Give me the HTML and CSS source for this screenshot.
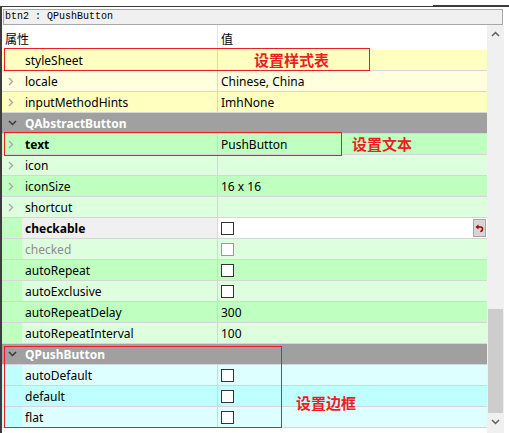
FILE: index.html
```html
<!DOCTYPE html>
<html>
<head>
<meta charset="utf-8">
<title>Property Editor</title>
<link rel="stylesheet" href="styles.css">
</head>
<body>
<div class="edge"><div class="edge-thin"></div><div class="edge-thick"></div></div>
<div class="window">
  <div class="objname">btn2 : QPushButton</div>
  <div class="view">
    <div class="tree">
      <div class="head"><div class="hname">属性</div><div class="hval">值</div></div>

      <div class="row yellow dark leaf"><div class="name"><span class="br"></span><span class="label">styleSheet</span></div><div class="val"></div></div>
      <div class="row yellow light"><div class="name"><span class="br"><svg class="chev" width="6" height="9" viewBox="0 0 6 9"><path d="M1 1 L4.5 4.5 L1 8"/></svg></span><span class="label">locale</span></div><div class="val"><span class="vtext">Chinese, China</span></div></div>
      <div class="row yellow dark"><div class="name"><span class="br"><svg class="chev" width="6" height="9" viewBox="0 0 6 9"><path d="M1 1 L4.5 4.5 L1 8"/></svg></span><span class="label">inputMethodHints</span></div><div class="val"><span class="vtext">ImhNone</span></div></div>

      <div class="row group"><div class="gname"><span class="br"><svg class="gchev" width="9" height="6" viewBox="0 0 9 6"><path d="M1 1 L4.5 4.5 L8 1"/></svg></span><span class="label">QAbstractButton</span></div></div>

      <div class="row green dark"><div class="name"><span class="br"><svg class="chev" width="6" height="9" viewBox="0 0 6 9"><path d="M1 1 L4.5 4.5 L1 8"/></svg></span><span class="label bold">text</span></div><div class="val"><span class="vtext">PushButton</span></div></div>
      <div class="row green light"><div class="name"><span class="br"><svg class="chev" width="6" height="9" viewBox="0 0 6 9"><path d="M1 1 L4.5 4.5 L1 8"/></svg></span><span class="label">icon</span></div><div class="val"></div></div>
      <div class="row green dark"><div class="name"><span class="br"><svg class="chev" width="6" height="9" viewBox="0 0 6 9"><path d="M1 1 L4.5 4.5 L1 8"/></svg></span><span class="label">iconSize</span></div><div class="val"><span class="vtext">16 x 16</span></div></div>
      <div class="row green light"><div class="name"><span class="br"><svg class="chev" width="6" height="9" viewBox="0 0 6 9"><path d="M1 1 L4.5 4.5 L1 8"/></svg></span><span class="label">shortcut</span></div><div class="val"></div></div>
      <div class="row green dark leaf editing"><div class="name"><span class="br"></span><span class="label bold">checkable</span></div><div class="val"><span class="cb"></span><span class="reset"><svg width="9" height="9" viewBox="0 0 9 9"><path class="rhead" d="M0.5 3 L3.5 0.5 L3.5 5.5 Z"/><path class="rtail" d="M3 3 H5.5 Q7.5 3 7.5 5 Q7.5 7.2 5.3 7.5"/></svg></span></div></div>
      <div class="row green light leaf disabled"><div class="name"><span class="br"></span><span class="label">checked</span></div><div class="val"><span class="cb"></span></div></div>
      <div class="row green dark leaf"><div class="name"><span class="br"></span><span class="label">autoRepeat</span></div><div class="val"><span class="cb"></span></div></div>
      <div class="row green light leaf"><div class="name"><span class="br"></span><span class="label">autoExclusive</span></div><div class="val"><span class="cb"></span></div></div>
      <div class="row green dark leaf"><div class="name"><span class="br"></span><span class="label">autoRepeatDelay</span></div><div class="val"><span class="vtext">300</span></div></div>
      <div class="row green light leaf"><div class="name"><span class="br"></span><span class="label">autoRepeatInterval</span></div><div class="val"><span class="vtext">100</span></div></div>

      <div class="row group"><div class="gname"><span class="br"><svg class="gchev" width="9" height="6" viewBox="0 0 9 6"><path d="M1 1 L4.5 4.5 L8 1"/></svg></span><span class="label">QPushButton</span></div></div>

      <div class="row cyan light leaf"><div class="name"><span class="br"></span><span class="label">autoDefault</span></div><div class="val"><span class="cb"></span></div></div>
      <div class="row cyan dark leaf"><div class="name"><span class="br"></span><span class="label">default</span></div><div class="val"><span class="cb"></span></div></div>
      <div class="row cyan light leaf"><div class="name"><span class="br"></span><span class="label">flat</span></div><div class="val"><span class="cb"></span></div></div>
    </div>
    <div class="scroll">
      <div class="sbtn"><svg class="schev" width="9" height="6" viewBox="0 0 9 6"><path d="M1 5 L4.5 1.5 L8 5"/></svg></div>
      <div class="track"><div class="thumb"></div></div>
      <div class="sbtn"><svg class="schev" width="9" height="6" viewBox="0 0 9 6"><path d="M1 1 L4.5 4.5 L8 1"/></svg></div>
    </div>
  </div>
</div>

<div class="mark mark-style"></div>
<div class="note note-style">设置样式表</div>
<div class="mark mark-text"></div>
<div class="note note-text">设置文本</div>
<div class="mark mark-push"></div>
<div class="note note-push">设置边框</div>
</body>
</html>
```
FILE: styles.css
```css
* { box-sizing: border-box; }
html, body { margin: 0; padding: 0; background: #fff; }
body {
  width: 509px;
  height: 433px;
  overflow: hidden;
  position: relative;
  font-family: "Noto Sans", "Noto Sans CJK SC", sans-serif;
  font-size: 12px;
  color: #000;
}

.edge { display: flex; height: 7px; align-items: flex-start; padding-top: 5px; }
.edge-thin { flex: 0 0 433px; height: 1px; margin-top: 1px; background: #3c3c3c; }
.edge-thick { flex: 1; height: 2px; background: #3c3c3c; }

.window {
  border-left: 2px solid #3c3c3c;
  height: 426px;
  padding-top: 2px;
}

.objname {
  margin-left: 1px;
  width: 500px;
  height: 16px;
  border: 1px solid #a8a8a8;
  background: #f0f0f0;
  font-family: "Liberation Mono", monospace;
  font-size: 10px;
  line-height: 14px;
  padding-left: 1px;
  color: #000;
}

.view { display: flex; height: 408px; }
.tree { width: 485px; overflow: hidden; }

.head {
  display: flex;
  height: 25px;
  background: #fff;
}
.hname { width: 216px; padding: 5px 0 0 3px; border-right: 1px solid #e3e3e3; }
.hval { flex: 1; padding: 5px 0 0 3px; }

.row {
  display: flex;
  height: 21px;
  border-bottom: 1px solid #d6d6d6;
  line-height: 20px;
}
.yellow { --c: #ffffbf; --l: #ffffdd; }
.green { --c: #bfffbf; --l: #ddffdd; }
.cyan { --c: #bfffff; --l: #ddffff; }
.dark { background: var(--c); }
.light { background: var(--l); }
.leaf .br { background: var(--c); }

.name { display: flex; width: 216px; border-right: 1px solid #d6d6d6; }
.br { flex: 0 0 20px; display: flex; align-items: center; justify-content: center; }
.label { padding: 2px 0 0 3px; line-height: 18px; white-space: nowrap; }
.bold { font-weight: bold; }
.val { flex: 1; padding-left: 3px; display: flex; align-items: center; white-space: nowrap; }
.vtext { padding-top: 2px; line-height: 18px; }

.chev { margin-left: -2px; }
.chev path { fill: none; stroke: #a8a8a8; stroke-width: 1.4; }

.group { background: #a0a0a0; }
.gname { display: flex; flex: 1; }
.group .label { color: #fff; font-weight: bold; }
.gchev path { fill: none; stroke: #3a3a3a; stroke-width: 1.5; }

.editing .name { background: #f0f0f0; }
.editing .name .br { background: var(--c); }
.editing .val { background: #fff; }

.cb {
  width: 13px;
  height: 13px;
  border: 1px solid #333;
  background: #fff;
  margin-top: 1px;
}
.disabled .label { color: #8c8c8c; }
.disabled .cb { border-color: #9a9a9a; }

.reset {
  margin-left: auto;
  margin-right: 1px;
  width: 13px;
  height: 18px;
  background: #d6d6d6;
  border: 1px solid #a6a6a6;
  display: flex;
  align-items: center;
  justify-content: center;
}
.rhead { fill: #a00000; }
.rtail { fill: none; stroke: #a00000; stroke-width: 1.6; }

.scroll {
  width: 17px;
  background: #f0f0f0;
  display: flex;
  flex-direction: column;
}
.sbtn { height: 17px; display: flex; align-items: center; justify-content: center; }
.schev path { fill: none; stroke: #606060; stroke-width: 1.5; }
.track { height: 371px; display: flex; flex-direction: column; justify-content: flex-end; }
.thumb { height: 104px; margin: 0 1px; background: #cdcdcd; }

.mark {
  position: absolute;
  border: 1px solid #ee1d25;
}
.mark-style { left: 4px; top: 48px; width: 366px; height: 23px; }
.mark-text { left: 4px; top: 132px; width: 338px; height: 24px; }
.mark-push { left: 4px; top: 346px; width: 278px; height: 82px; }

.note {
  position: absolute;
  font-family: "Noto Sans CJK SC", sans-serif;
  font-size: 15px;
  font-weight: bold;
  line-height: 18px;
  color: #ee1d25;
  white-space: nowrap;
}
.note-style { left: 254px; top: 51px; }
.note-text { left: 352px; top: 135px; }
.note-push { left: 296px; top: 394px; }
```
